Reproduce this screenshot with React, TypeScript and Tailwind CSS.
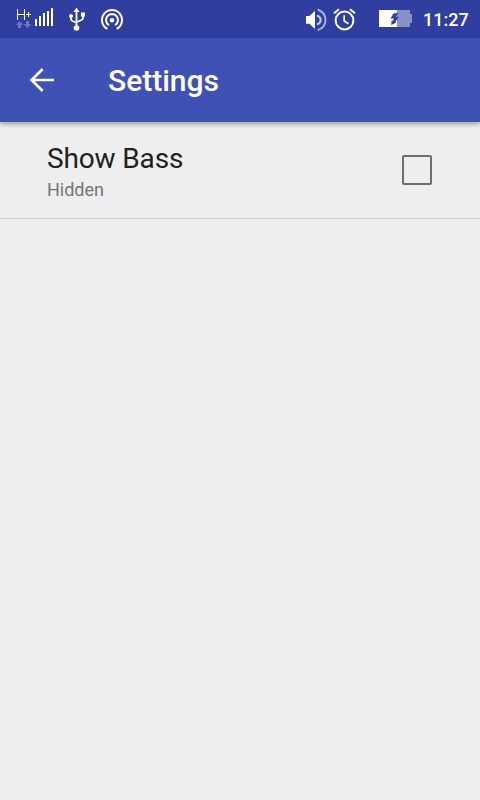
import React from "react";

function SignalIcon() {
  return (
    <svg className="ml-4 h-[38px] w-[38px]" viewBox="16 0 38 38" fill="#fff">
      <path d="M17 9h1v5h6V9h1v11h-1v-5h-6v5h-1zM28 12h1v2h2v1h-2v2h-1v-2h-2v-1h2z" />
      <path d="M35 19h2v7h-2zM39 16h2v10h-2zM43 13h2v13h-2zM47 11h2v15h-2zM51 8h2v18h-2z" />
      <path fill="#6a76bd" d="M19.500 21l3.700 4H21v3h-3v-3h-2.200zM26 21h3v3h2.200l-3.700 4-3.700-4H26z" />
    </svg>
  );
}

function UsbIcon() {
  return (
    <svg className="ml-[14px] h-[38px] w-[18px]" viewBox="68 0 18 38" fill="#fff">
      <path d="M76.500 7.500l3 4.500h-6z" />
      <circle cx="76.500" cy="28" r="2.800" />
      <circle cx="71" cy="16" r="2" />
      <path d="M81 12.500h4v4h-4z" />
      <path
        d="M76.500 10v17M71 16v3q0 1.500 1.500 2l4 1.800M83 15v3q0 1.500-1.500 2l-5 2.300"
        fill="none"
        stroke="#fff"
        strokeWidth="1.800"
      />
    </svg>
  );
}

function HotspotIcon() {
  return (
    <svg className="ml-[14px] h-[38px] w-6" viewBox="100 0 24 38" fill="none" stroke="#fff" strokeWidth="2">
      <circle cx="112" cy="20.300" r="2.300" fill="#fff" stroke="none" />
      <path d="M109 25.200a6 6 0 1 1 6 0M107.300 28.800a10 10 0 1 1 9.400 0" />
    </svg>
  );
}

function VolumeIcon() {
  return (
    <svg className="h-[38px] w-[22px]" viewBox="306 0 22 38" fill="none">
      <path d="M306 16h3.500l5.500-5.200V29l-5.500-5.200H306z" fill="#fff" />
      <path d="M317 15.500q3.700 1.500 3.700 4.500t-3.700 4.500" stroke="#c4c9e5" strokeWidth="2" />
      <path d="M317.700 9.500q7.800 3 7.800 10.400t-7.800 10.200" stroke="#a9b0d9" strokeWidth="1.900" />
    </svg>
  );
}

function AlarmIcon() {
  return (
    <svg className="ml-[5px] h-[38px] w-6" viewBox="333 0 24 38" fill="none" stroke="#fff">
      <circle cx="344.500" cy="20.500" r="8.900" strokeWidth="2" />
      <path d="M334 13.300l5-4M350 9.300l5 4" strokeWidth="2" />
      <path d="M344.200 15.300v5.700l4.300 2.700" strokeWidth="1.600" />
    </svg>
  );
}

function BatteryIcon() {
  return (
    <svg className="ml-[22px] h-[38px] w-[33px]" viewBox="379 0 33 38">
      <path d="M379 10h18v17h-18z" fill="#fff" />
      <path d="M397 10h13v4h2v9h-2v4h-13z" fill="#8790c9" />
      <path d="M393.500 13.500l4.700-.7-2 4h2.600l-3.300 5 .8.700-5 2.500.2-4.500 1 .6 1.500-2.600h-3.500z" fill="#303f9f" />
    </svg>
  );
}

function StatusBar() {
  return (
    <header className="relative z-10 flex h-[38px] shrink-0 items-center bg-[#303f9f]">
      <SignalIcon />
      <UsbIcon />
      <HotspotIcon />
      <div className="flex-1" />
      <VolumeIcon />
      <AlarmIcon />
      <BatteryIcon />
      <time className="ml-[11px] mr-[12px] w-[45px] whitespace-nowrap pt-[2px] text-[18px] font-medium leading-none text-white">
        11:27
      </time>
    </header>
  );
}

export default function App() {
  return (
    <div className="flex h-[800px] w-[480px] flex-col overflow-hidden bg-[#eeeeee] font-['Roboto',sans-serif]">
      <StatusBar />
      <div className="flex h-[84px] shrink-0 items-center bg-[#3f51b5] shadow-[0_2px_5px_rgba(0,0,0,0.35)]">
        <button className="ml-[30px] flex w-[78px]" aria-label="Back">
          <svg className="h-6 w-6" viewBox="0 0 24 24" fill="none" stroke="#fff" strokeWidth="2.600">
            <path d="M24 12H2M12.700 1L1.700 12l11 11" />
          </svg>
        </button>
        <h1 className="pt-[2px] text-[30px] font-medium leading-none text-white">Settings</h1>
      </div>
      <label className="flex h-[97px] items-center border-b border-[#cfcfcf] pl-[47px] pr-[48px]">
        <span className="flex flex-1 flex-col pt-[5px]">
          <span className="text-[28px] leading-[34px] tracking-[-0.15px] text-[#212121]">Show Bass</span>
          <span className="text-[18px] leading-[28px] text-[#757575]">Hidden</span>
        </span>
        <input
          type="checkbox"
          className="h-[30px] w-[30px] appearance-none rounded-[2px] border-2 border-[#6e6e6e]"
        />
      </label>
    </div>
  );
}
